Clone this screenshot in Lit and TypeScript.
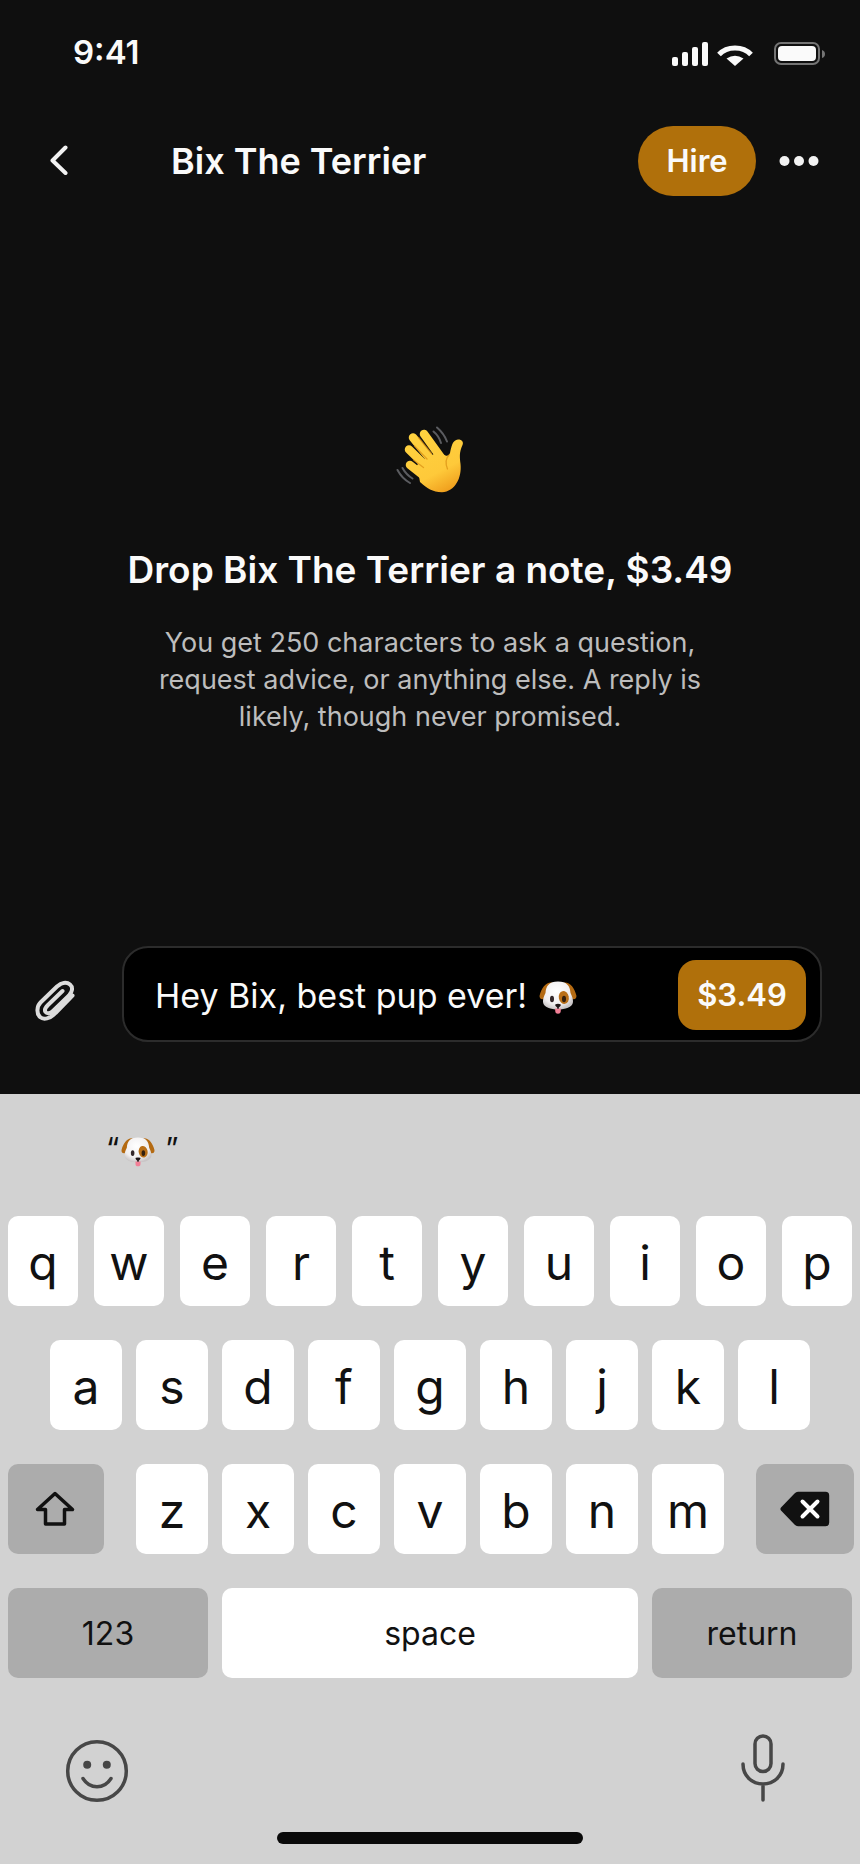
import { LitElement, html, css, svg } from "lit";
import { customElement, property } from "lit/decorators.js";

@customElement("waving-hand")
export class WavingHand extends LitElement {
  static styles = css`
    :host { display: block; }
    .art { display: block; width: 100%; height: auto; }
  `;
  render() {
    return html`<svg class="art" viewBox="0 0 68 68" role="img" aria-label="Waving hand">
      <defs>
        <linearGradient id="skin" gradientUnits="userSpaceOnUse" x1="20" y1="8" x2="52" y2="68">
          <stop offset="0" stop-color="#ffd23f"></stop>
          <stop offset="0.65" stop-color="#fec93a"></stop>
          <stop offset="1" stop-color="#ee9a1a"></stop>
        </linearGradient>
      </defs>
      <g fill="none" stroke="#5b5c60" stroke-width="2" stroke-linecap="round">
        <path d="M41 1.500q7 6 10 14M37.500 5.500q5.500 4.500 7.500 11.500"></path>
        <path d="M1.500 44q4.500 8.500 12.500 13M6.500 42q3.500 6.500 10 10.500"></path>
      </g>
      <g fill="none" stroke="url(#skin)" stroke-width="8.500" stroke-linecap="round" stroke-linejoin="round">
        <path d="M28 8L46 33"></path>
        <path d="M17 11.500L40 40"></path>
        <path d="M13 23.500L36 46"></path>
        <path d="M14 39L33 54"></path>
      </g>
      <path fill="url(#skin)" d="M42 26L49.500 29.500Q53 30.500 54 27C55.300 21 56.500 13.800 62 13.500C66 13.400 67.800 16 66.500 19C63 26.500 63.800 31 64.500 38C66 52 59 65.500 46 66.300C36.500 66.300 31 62 24 56L21 39L32 31Z"></path>
      <g fill="none" stroke="#d98e12" stroke-width="1.300" stroke-linecap="round" opacity="0.700">
        <path d="M22.500 11.500L35.500 27.500M18.500 20L31 33M17.500 34L27.500 41.500M53 29q-5 5-1.500 14"></path>
      </g>
    </svg>`;
  }
}

@customElement("dog-face")
export class DogFace extends LitElement {
  static styles = css`
    :host { display: block; }
    .art { display: block; width: 100%; height: auto; }
  `;
  render() {
    return html`<svg class="art" viewBox="0 0 38 33" role="img" aria-label="Dog">
      <defs>
        <radialGradient id="fur" cx="0.45" cy="0.35" r="0.65">
          <stop offset="0" stop-color="#ffffff"></stop>
          <stop offset="0.7" stop-color="#f1eff0"></stop>
          <stop offset="1" stop-color="#c9c5c6"></stop>
        </radialGradient>
      </defs>
      <path fill="#b46a12" d="M13 1.500C7 .8 2.500 7 .6 14.500C0 17.600 3 19.300 5.500 17.500L9 12ZM25 1.500C31 .8 35.500 7 37.400 14.500C38 17.600 35 19.300 32.500 17.500L29 12Z"></path>
      <path fill="url(#fur)" d="M19 .5C28 .5 31 5 31.500 12C33 15 34.200 18 34 21C33.500 26.500 26 28.500 19 28.500S4.500 26.500 4 21C3.800 18 5 15 6.500 12C7 5 10 .5 19 .5Z"></path>
      <ellipse cx="24.800" cy="16.500" rx="5" ry="6.500" fill="#b9701a" transform="rotate(-12 24.800 16.500)"></ellipse>
      <ellipse cx="13" cy="18" rx="2" ry="3.300" fill="#33272a"></ellipse>
      <ellipse cx="25" cy="18" rx="2" ry="3.300" fill="#33200f"></ellipse>
      <path fill="#f27f96" d="M16.200 27.500h5.600v2.300a2.800 3 0 0 1-5.600 0Z"></path>
      <path fill="#1d1416" d="M16.500 23.300q2.500-1 5 0q.8.800-.3 1.900L19.800 26.500v1.300h-1.600v-1.300L16.800 25.200q-1.100-1.100-.3-1.900Z"></path>
    </svg>`;
  }
}

@customElement("key-board")
export class KeyBoard extends LitElement {
  static styles = css`
    :host {
      display: block;
      background: #d2d2d2;
      color: #111;
      font-family: Inter, "Liberation Sans", sans-serif;
    }
    .suggestions { display: flex; padding: 32px 106px 0; height: 90px; }
    .suggestion {
      display: flex; align-items: flex-start; gap: 2px;
      border: 0; padding: 0; background: none; color: inherit;
      font: 400 30px/44px Inter, "Liberation Sans", sans-serif;
    }
    .pup { width: 34px; padding-top: 11px; }
    .close { padding-left: 8px; }
    .rows { display: flex; flex-direction: column; gap: 34px; padding: 0 6px 0 8px; }
    .row { display: flex; gap: 14px; }
    .row.wide { gap: 16px; padding-right: 2px; }
    .row.inset { padding: 0 44px 0 42px; }
    .row.shifted { gap: 32px; }
    .row.last { padding-right: 2px; }
    .letters { flex: 6; display: flex; gap: 14px; }
    .key {
      flex: 1 1 0; min-width: 0; height: 90px;
      display: flex; align-items: center; justify-content: center;
      border: 0; border-radius: 10px; padding: 4px 0 0;
      background: #fff; color: #111;
      font: 400 48px/60px Inter, "Liberation Sans", sans-serif;
    }
    .key.dark { background: #acacac; }
    .key.side { flex: 0 0 96px; padding: 0; }
    .key.delete { flex-basis: 98px; }
    .key.word { flex: 0 0 200px; padding-top: 2px; font-size: 32px; }
    .key.space { flex: 1 1 0; }
    .tools {
      display: flex; justify-content: space-between; align-items: flex-end;
      padding: 50px 72px 0 64px;
    }
    .tool { display: flex; border: 0; padding: 0; background: none; color: #474747; }
    .tool.smile { padding-bottom: 4px; }
    .home { width: 306px; height: 12px; border-radius: 6px; background: #0a0a0a; margin: 24px auto 0; }
    .foot { padding-bottom: 20px; }
  `;

  private keys(letters: string) {
    return [...letters].map((l) => html`<button class="key">${l}</button>`);
  }

  render() {
    return html`
      <div class="suggestions">
        <button class="suggestion" aria-label="Suggest dog emoji">
          <span>“</span><dog-face class="pup"></dog-face><span class="close">”</span>
        </button>
      </div>
      <div class="rows">
        <div class="row wide">${this.keys("qwertyuiop")}</div>
        <div class="row inset">${this.keys("asdfghjkl")}</div>
        <div class="row shifted">
          <button class="key dark side" aria-label="Shift">
            <svg width="44" height="38" viewBox="0 0 44 38" fill="none" stroke="#111" stroke-width="3.500" stroke-linejoin="round">
              <path d="M21 3.500L38.500 19.500H30.500V34H11.500V19.500H3.500Z"></path>
            </svg>
          </button>
          <div class="letters">${this.keys("zxcvbnm")}</div>
          <button class="key dark side delete" aria-label="Delete">
            <svg width="50" height="36" viewBox="0 0 50 36">
              <path fill="#111" d="M14.500 2.500Q16 .8 18 .8H45.500Q49.200 .8 49.200 4.500V31.500Q49.200 35.200 45.500 35.200H18Q16 35.200 14.500 33.500L1 19.500Q-.2 18 1 16.500Z"></path>
              <path d="M22.500 10.500L37.500 25.500M37.500 10.500L22.500 25.500" stroke="#fff" stroke-width="4" stroke-linecap="round"></path>
            </svg>
          </button>
        </div>
        <div class="row last">
          <button class="key dark word">123</button>
          <button class="key word space">space</button>
          <button class="key dark word">return</button>
        </div>
      </div>
      <div class="foot">
        <div class="tools">
          <button class="tool smile" aria-label="Emoji">
            <svg width="66" height="66" viewBox="0 0 66 66" fill="none" stroke="currentColor" stroke-width="3.500" stroke-linecap="round">
              <circle cx="33" cy="33" r="29.300"></circle>
              <path d="M19 40.500C26 51.500 40 51.500 47 40.500"></path>
              <g fill="currentColor" stroke="none"><circle cx="23.200" cy="26.800" r="4"></circle><circle cx="42.800" cy="26.800" r="4"></circle></g>
            </svg>
          </button>
          <button class="tool" aria-label="Dictate">
            <svg width="50" height="80" viewBox="0 0 50 80" fill="none" stroke="currentColor" stroke-width="3.500" stroke-linecap="round">
              <rect x="17" y="8" width="16" height="35.500" rx="8"></rect>
              <path d="M5 36C5 48 14 56 25 56S45 48 45 36M25 56V72"></path>
            </svg>
          </button>
        </div>
        <div class="home"></div>
      </div>
    `;
  }
}

@customElement("app-root")
export class AppRoot extends LitElement {
  @property() name = "Bix The Terrier";
  @property() price = "$3.49";
  @property() draft = "Hey Bix, best pup ever!";

  static styles = css`
    :host {
      display: flex; flex-direction: column; min-height: 100vh;
      background: #0f0f0f; color: #fafafa;
      font-family: Inter, "Liberation Sans", sans-serif;
    }
    .status {
      display: flex; align-items: flex-end; justify-content: space-between;
      padding: 30px 34px 9px 73px; height: 37px;
      font-size: 33px; font-weight: 600;
    }
    .clock { align-self: flex-start; line-height: 44px; }
    .bar { display: flex; align-items: center; padding: 50px 38px 0 43px; }
    .bare { display: flex; border: 0; padding: 0; background: none; color: #f2f2f2; }
    .name { flex: 1; margin: 0; padding-left: 96px; font-size: 36px; line-height: 48px; font-weight: 600; }
    .hire {
      width: 118px; height: 70px; border: 0; border-radius: 35px; padding: 0; margin-right: 20px;
      background: #b0700b; color: #fafafa; font: 600 31px/40px Inter, "Liberation Sans", sans-serif;
    }
    .intro {
      flex: 1; display: flex; flex-direction: column; align-items: center; text-align: center;
      padding: 230px 120px 0;
    }
    .wave { width: 68px; }
    .title { margin: 52px 0 0; font-size: 37px; line-height: 48px; font-weight: 600; white-space: nowrap; }
    .hint { margin: 30px 0 0; max-width: 580px; font-size: 27px; line-height: 37px; color: #bdbdbd; }
    .composer { display: flex; align-items: center; gap: 46px; padding: 0 38px 52px 34px; }
    .attach { padding-top: 14px; }
    .field {
      flex: 1; display: flex; align-items: center; box-sizing: border-box; height: 96px;
      border: 2px solid #2c2c2c; border-radius: 26px; background: #000; padding: 2px 14px 0 31px;
    }
    .text {
      field-sizing: content; min-width: 0; border: 0; padding: 2px 0 0; outline: 0; background: none; color: #fafafa;
      font: 400 34px/48px Inter, "Liberation Sans", sans-serif;
    }
    .pup { width: 38px; margin-left: 12px; padding-top: 4px; }
    .send {
      width: 128px; height: 70px; border: 0; border-radius: 18px; padding: 0; margin-left: auto;
      background: #b0700b; color: #fafafa; font: 600 31px/40px Inter, "Liberation Sans", sans-serif;
    }
  `;

  private bars() {
    return [9, 14, 19, 24].map((h, i) => svg`<rect x=${1 + i * 10} y=${25 - h} width="6" height=${h} rx="2" fill="#fafafa"></rect>`);
  }

  render() {
    return html`
      <div class="status">
        <span class="clock">9:41</span>
        <svg width="155" height="26" viewBox="0 0 155 26" role="img" aria-label="Signal, Wi-Fi and battery">
          ${this.bars()}
          <path d="M48 13.500C56 4.800 72 4.800 80 13.500" fill="none" stroke="#fafafa" stroke-width="5"></path>
          <path d="M55.500 17.500Q64 12 72.500 17.500L64 25Z" fill="#fafafa"></path>
          <rect x="104" y="2" width="44" height="21" rx="6" fill="none" stroke="#747474" stroke-width="2"></rect>
          <rect x="107" y="5" width="38" height="15" rx="4" fill="#fafafa"></rect>
          <path d="M151 9Q154 10 154 13T151 17Z" fill="#747474"></path>
        </svg>
      </div>
      <header class="bar">
        <button class="bare" aria-label="Back">
          <svg width="32" height="32" viewBox="0 0 32 32" fill="none" stroke="currentColor" stroke-width="4" stroke-linecap="round" stroke-linejoin="round">
            <path d="M22.500 2.500L9.500 15.500L22.500 28"></path>
          </svg>
        </button>
        <h1 class="name">${this.name}</h1>
        <button class="hire">Hire</button>
        <button class="bare" aria-label="More options">
          <svg width="46" height="24" viewBox="0 0 46 24" fill="currentColor">
            <circle cx="8.500" cy="12" r="5"></circle><circle cx="23" cy="12" r="5"></circle><circle cx="37.500" cy="12" r="5"></circle>
          </svg>
        </button>
      </header>
      <main class="intro">
        <waving-hand class="wave"></waving-hand>
        <h2 class="title">Drop ${this.name} a note, ${this.price}</h2>
        <p class="hint">You get 250 characters to ask a question, request advice, or anything else. A reply is likely, though never promised.</p>
      </main>
      <form class="composer" @submit=${(e: Event) => e.preventDefault()}>
        <button class="bare attach" type="button" aria-label="Attach a file">
          <svg width="42" height="42" viewBox="0 0 42 42" fill="none" stroke="#dcdcdc" stroke-width="4" stroke-linecap="round" stroke-linejoin="round">
            <path d="M38.500 15.500L21.500 33C16 39 9.500 40 6 37S2.500 26.500 6.500 22.500L23 6.500C27.500 2.500 32.500 1.500 36 4.500S38 12 35 15.500L19 31C16 34 12.500 33.500 11.500 32S11 28 14 25L28.500 11"></path>
          </svg>
        </button>
        <div class="field">
          <input class="text" aria-label="Message" .value=${this.draft}>
          <dog-face class="pup"></dog-face>
          <button class="send">${this.price}</button>
        </div>
      </form>
      <key-board></key-board>
    `;
  }
}
